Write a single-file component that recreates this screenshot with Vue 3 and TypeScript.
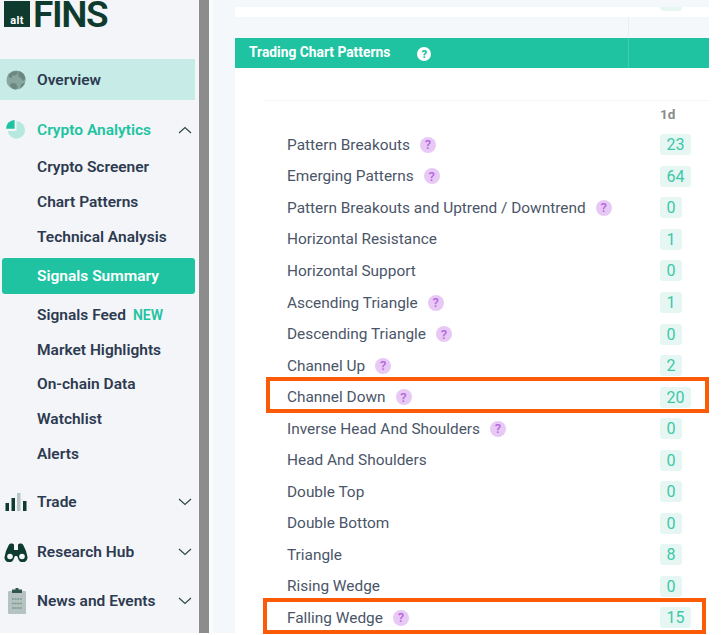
<script setup lang="ts">
const analytics = ['Crypto Screener', 'Chart Patterns', 'Technical Analysis']
const analytics2 = ['Market Highlights', 'On-chain Data', 'Watchlist', 'Alerts']
const rows: { name: string; help: boolean; value: string }[] = [
  { name: 'Pattern Breakouts', help: true, value: '23' },
  { name: 'Emerging Patterns', help: true, value: '64' },
  { name: 'Pattern Breakouts and Uptrend / Downtrend', help: true, value: '0' },
  { name: 'Horizontal Resistance', help: false, value: '1' },
  { name: 'Horizontal Support', help: false, value: '0' },
  { name: 'Ascending Triangle', help: true, value: '1' },
  { name: 'Descending Triangle', help: true, value: '0' },
  { name: 'Channel Up', help: true, value: '2' },
  { name: 'Channel Down', help: true, value: '20' },
  { name: 'Inverse Head And Shoulders', help: true, value: '0' },
  { name: 'Head And Shoulders', help: false, value: '0' },
  { name: 'Double Top', help: false, value: '0' },
  { name: 'Double Bottom', help: false, value: '0' },
  { name: 'Triangle', help: false, value: '8' },
  { name: 'Rising Wedge', help: false, value: '0' },
  { name: 'Falling Wedge', help: true, value: '15' },
]
</script>

<template>
  <div class="page">
    <aside class="sidebar">
      <div class="logo">
        <div class="logo-mark"><span>alt</span></div>
        <span class="logo-word">FINS</span>
      </div>
      <nav class="nav">
        <div class="item overview">
          <svg class="ico" viewBox="0 0 22 22"><circle cx="11" cy="11" r="10.500" fill="#86a69e"/><path d="M3 5c3-3 6-4 9-4l1 3-3 2-3 0-1 3-3-1zM14 1c4 1 7 4 7.500 9l-3 2-2-3-3-2zM6 14l5 1 2 4-2 2.500c-3 0-5-2-6.500-4.500zM17 15l3.500-1c-1 3-3 5-5.500 6.500z" fill="#6c8780"/></svg>
          <span>Overview</span>
        </div>
        <div class="item analytics">
          <svg class="ico" viewBox="0 0 22 22"><path d="M11.500 1.500a9.500 9.500 0 1 1-9.500 10.500h9.500z" fill="#b5e8de"/><path d="M9.500 0v9.500H0A9.500 9.500 0 0 1 9.500 0z" fill="#20c3a1"/></svg>
          <span>Crypto Analytics</span>
          <svg class="chev" viewBox="0 0 14 8"><path d="M1 7l6-5.500 6 5.500" /></svg>
        </div>
        <div class="sub" v-for="s in analytics" :key="s">{{ s }}</div>
        <div class="sub active">Signals Summary</div>
        <div class="sub">Signals Feed <em>NEW</em></div>
        <div class="sub" v-for="s in analytics2" :key="s">{{ s }}</div>
        <div class="item trade">
          <svg class="ico" viewBox="0 0 22 20"><rect x="0.500" y="11" width="3.500" height="8" fill="#0e3b2e"/><rect x="6.500" y="6" width="3.500" height="13" fill="#0e3b2e"/><rect x="12" y="1" width="3.500" height="18" fill="#b7c4c1"/><rect x="18" y="9" width="3.500" height="10" fill="#0e3b2e"/></svg>
          <span>Trade</span>
          <svg class="chev" viewBox="0 0 14 8"><path d="M1 1l6 5.500 6-5.500" /></svg>
        </div>
        <div class="item hub">
          <svg class="ico wide" viewBox="0 0 24 20"><path d="M2 9 5 2.500C6 1 9 1 10 2.500V8h4V2.500C15 1 18 1 19 2.500L22 9l1.500 6a4.500 4.500 0 0 1-9.500 1l-1-2h-2l-1 2a4.500 4.500 0 0 1-9.500-1z" fill="#0e3b2e"/><circle cx="6" cy="14.500" r="2.800" fill="#f3f5f8"/><circle cx="18" cy="14.500" r="2.800" fill="#f3f5f8"/></svg>
          <span>Research Hub</span>
          <svg class="chev" viewBox="0 0 14 8"><path d="M1 1l6 5.500 6-5.500" /></svg>
        </div>
        <div class="item news">
          <svg class="ico" viewBox="0 0 20 26"><rect x="1" y="3" width="18" height="23" rx="1" fill="#b4c3bf"/><rect x="5" y="1.500" width="10" height="3.500" fill="#33564c"/><rect x="8.500" y="0" width="3" height="3" fill="#33564c"/><path d="M5 11h10M5 15.500h10M5 20h10" stroke="#7f9690" stroke-width="1.300" stroke-dasharray="2 .6"/></svg>
          <span>News and Events</span>
          <svg class="chev" viewBox="0 0 14 8"><path d="M1 1l6 5.500 6-5.500" /></svg>
        </div>
      </nav>
    </aside>
    <div class="scrollbar"></div>
    <main class="main">
      <div class="card prev">
        <span class="prev-name">Moving <span class="prev-word">Average</span> (MA)</span>
        <span class="prev-badge"></span>
      </div>
      <section class="card patterns">
        <header class="band">
          <span class="band-title">Trading Chart Patterns</span>
          <span class="band-help">?</span>
          <span class="band-cell"></span>
        </header>
        <div class="head-row">1d</div>
        <div class="row" v-for="r in rows" :key="r.name">
          <span class="name">{{ r.name }}</span>
          <span v-if="r.help" class="help">?</span>
          <span class="value">{{ r.value }}</span>
        </div>
      </section>
      <div class="mark mark-a"></div>
      <div class="mark mark-b"></div>
    </main>
  </div>
</template>

<style>
html, body { margin: 0; background: #fff; overflow: hidden; }
</style>

<style scoped>
.page {
  width: 721px;
  height: 635px;
  display: flex;
  align-items: flex-start;
  font-family: Roboto, "Liberation Sans", sans-serif;
  overflow: hidden;
}
.sidebar {
  width: 199px;
  height: 633px;
  flex: none;
  background: #f3f5f8;
  box-sizing: border-box;
  padding-right: 4px;
}
.logo { height: 59px; display: flex; align-items: flex-start; padding-left: 4px; gap: 3px; }
.logo-mark {
  width: 26px; height: 26px; background: #0e3b2e; margin-top: 1px;
  display: flex; align-items: flex-end; justify-content: center;
}
.logo-mark span {
  color: #fff; font-size: 11px; font-weight: 700; line-height: 12px; letter-spacing: 0.4px;
}
.logo-word { font-size: 37px; font-weight: 600; color: #0e3b2e; line-height: 29px; height: 29px; letter-spacing: -1.4px; }
.nav { display: flex; flex-direction: column; }
.item {
  display: flex; align-items: center; color: #2d3a50; font-size: 15.500px; font-weight: 600;
  padding-left: 4px; position: relative;
}
.item > span { margin-left: 33px; }
.ico { position: absolute; left: 6px; width: 20px; height: 20px; }
.ico.wide { left: 4px; width: 24px; height: 20px; }
.trade .ico { left: 5px; width: 22px; height: 20px; }
.news .ico { height: 26px; left: 7px; width: 20px; }
.chev { position: absolute; right: 3px; width: 14px; height: 8px; fill: none; stroke: #2f4a44; stroke-width: 1.200; }
.overview { height: 41px; background: #c7ebe6; }
.analytics { height: 42px; margin-top: 9px; margin-bottom: -1px; color: #20c3a1; }
.sub {
  height: 34.800px; display: flex; align-items: center; padding-left: 37px;
  color: #2d3a50; font-size: 15.500px; font-weight: 600; box-sizing: border-box;
}
.sub em { font-style: normal; color: #20c3a1; font-size: 14px; margin-left: 7px; }
.active {
  background: #20c3a1; color: #fff; border-radius: 3px; margin-left: 2px; padding-left: 35px; height: 36px;
  margin-top: 3.500px; margin-bottom: 3.500px;
}
.trade { height: 52px; margin-top: 5px; }
.hub { height: 48px; }
.news { height: 50px; }
.scrollbar { width: 10px; height: 633px; flex: none; background: #8c8c8c; }
.main {
  width: 500px; height: 633px; flex: none; background: #f4f8fb; position: relative; box-sizing: border-box;
  padding-left: 22px; border-left: 4px solid #fafbfd;
}
.main::before { content: ""; position: absolute; left: 415px; top: 0; width: 1px; height: 38px; background: #e8eef3; }
.card { background: #fff; }
.prev {
  height: 17px; position: relative; overflow: hidden;
  margin-bottom: 21px;
}
.prev::before { content: ""; position: absolute; left: 0; right: 0; top: 0; height: 7px; background: #f4f8fb; z-index: 1; }
.prev-name { color: #3f4a5a; font-size: 15.400px; position: absolute; left: 52px; top: -11px; white-space: nowrap; }
.prev-word { margin-left: 12px; }
.prev-badge { position: absolute; left: 425px; top: -8px; width: 22px; height: 19px; background: #e6f7f3; border-radius: 4px; }
.patterns { height: 595px; overflow: hidden; }
.band {
  height: 30px; background: #20c3a1; display: flex; align-items: center; color: #fff; position: relative;
}
.band-title { font-size: 13.800px; font-weight: 700; margin-left: 14px; position: relative; top: -1px; }
.band-help {
  width: 14px; height: 14px; border-radius: 50%; background: #fff; color: #20c3a1; font-size: 11px; font-weight: 900;
  display: flex; align-items: center; justify-content: center; margin-left: 27px; position: relative; top: 1px;
}
.band-cell { position: absolute; left: 393px; top: 0; bottom: 0; width: 1px; background: #3fcdb0; }
.head-row {
  margin-top: 32px; margin-left: 29px; border-top: 1px solid #f4f6f8; height: 28px;
  padding-left: 396px; line-height: 26px; color: #8a8a8a; font-size: 13.500px; font-weight: 700;
}
.row {
  height: 31.550px; display: flex; align-items: center; position: relative; padding-left: 52px;
  color: #4a5568; font-size: 15.400px;
}
.help {
  width: 16px; height: 16px; border-radius: 50%; background: #e8c9f5; color: #b565e0; font-size: 13px; font-weight: 500;
  display: flex; align-items: center; justify-content: center; margin-left: 10px;
}
.value {
  position: absolute; left: 425px; padding: 0 6.500px; height: 21px; line-height: 21px; background: #e6f7f3;
  color: #3cc7a8; border-radius: 3px; font-size: 16px; text-align: center;
}
.mark { position: absolute; border: 4px solid #fb5a06; box-sizing: border-box; pointer-events: none; }
.mark-a { left: 53px; top: 377px; width: 443px; height: 36px; }
.mark-b { left: 50px; top: 598px; width: 443px; height: 36px; }
</style>
